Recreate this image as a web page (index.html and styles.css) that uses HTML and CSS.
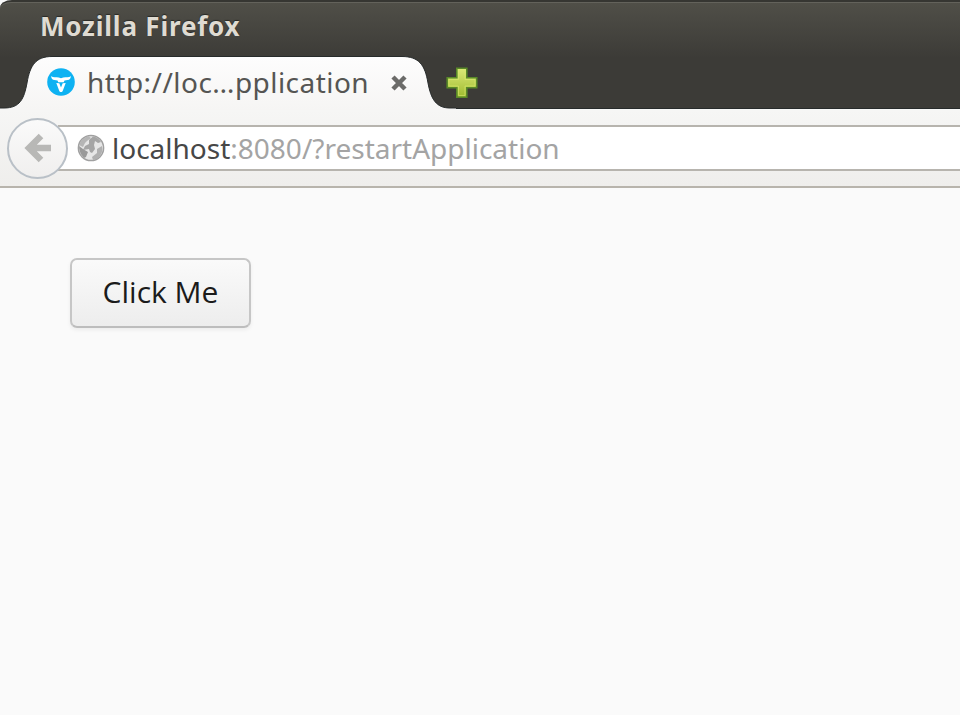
FILE: index.html
```html
<!DOCTYPE html>
<html lang="en">
<head>
<meta charset="utf-8">
<title>Mozilla Firefox</title>
<link rel="stylesheet" href="styles.css">
</head>
<body>
<header class="chrome">
  <div class="titlebar"><span class="title">Mozilla Firefox</span></div>
  <div class="tabs">
    <div class="tab">
      <svg class="tab-shape" width="460" height="55" viewBox="0 0 460 55">
        <defs><linearGradient id="tabfill" x1="0" y1="0" x2="0" y2="1"><stop offset="0" stop-color="#fdfdfd"/><stop offset="1" stop-color="#f6f5f4"/></linearGradient></defs>
        <path d="M0 55V53H8C24 53 28 44 31 28C34 10 40 1.500 56 1.500H406C423 1.500 429 10 432 28C435 44 440 53 454 53H460V55Z" fill="url(#tabfill)"/>
        <path d="M0 53H8C24 53 28 44 31 28C34 10 40 1.500 56 1.500H406C423 1.500 429 10 432 28C435 44 440 53 454 53H460" fill="none" stroke="#272b2b"/>
      </svg>
      <svg class="favicon" width="28" height="28" viewBox="0 0 28 28">
        <circle cx="14" cy="14" r="13.800" fill="#0eb2f2"/>
        <path d="M4.300 8Q5.500 9.600 9 9.200Q11.300 9 14 10.200Q16.700 9 19 9.200Q22.500 9.600 23.700 8Q24 11.700 20.500 12.100L17.500 12.500L16.700 14.200H11.300L10.500 12.500L7.500 12.100Q4 11.700 4.300 8Z" fill="#fff"/>
        <path d="M9.300 15L12.300 15.200L14 19.500L15.700 15.200L18.700 15L15.600 23.200Q14 25 12.400 23.200Z" fill="#fff"/>
      </svg>
      <span class="tab-label">http://loc…pplication</span>
      <svg class="close" width="18" height="18" viewBox="0 0 18 18"><path d="M3 3L15 15M15 3L3 15" stroke="#6b6b69" stroke-width="4.500"/></svg>
    </div>
    <svg class="newtab" width="32" height="32" viewBox="0 0 32 32">
      <defs><linearGradient id="plus" x1="0" y1="0" x2="0" y2="1"><stop offset="0" stop-color="#dce878"/><stop offset="1" stop-color="#9dbb2e"/></linearGradient></defs>
      <path d="M10.800 1.200H20.800V10.800H30.700V20.800H20.800V30.300H10.800V20.800H1.200V10.800H10.800Z" fill="url(#plus)" stroke="#598928" stroke-width="1.600"/>
      <path d="M12.500 3H19V12.500H29V19H19V28.500H12.500V19H3V12.500H12.500Z" fill="none" stroke="#d9e970" stroke-opacity=".6"/>
    </svg>
  </div>
</header>
<nav class="toolbar">
  <div class="back">
    <svg width="28" height="30" viewBox="0 0 28 30"><path d="M17 3L5 15L17 27M5 15H27" fill="none" stroke="#b8b8b6" stroke-width="6.500"/></svg>
  </div>
  <div class="urlbar">
    <svg class="globe" width="28" height="28" viewBox="0 0 28 28">
      <circle cx="14" cy="14" r="12.600" fill="#e6e6e6" stroke="#a0a0a0" stroke-width="1.500"/>
      <path d="M2 11Q4 5 11 2L14 4L10 7L8 9L6 13Z" fill="#b5b5b5"/>
      <path d="M12 6L16 2.500Q21 3 24 8L21 9L18 7L17 11L18 15L15 19L13 18L12 15L6 16L8 12L12 10Z" fill="#a5a5a5"/>
      <path d="M20 15L25 12Q27 19 20 25L16 26L15 23L20 19Z" fill="#b0b0b0"/>
      <path d="M2 12L6 15L11 18L9 23L7 24Q2 19 2 12Z" fill="#999"/>
    </svg>
    <span class="url"><span class="host">localhost</span>:8080/?restartApplication</span>
  </div>
</nav>
<main class="page"><button class="button"><span class="button-label">Click Me</span></button></main>
</body>
</html>
```
FILE: styles.css
```css
* { box-sizing: border-box; }
body { margin: 0; height: 715px; overflow: hidden; background: #fafafa; font-family: "Noto Sans", sans-serif; }
.chrome { height: 110px; background: linear-gradient(#504f48, #3c3b37 56px); border-top: 2px solid #363632; border-top-left-radius: 12px 8px; border-bottom: 1px solid #f8f8f7; }
.titlebar { height: 53px; padding-left: 40px; border-top: 1px solid #63625b; border-top-left-radius: 11px 7px; display: flex; align-items: center; }
.title { font-size: 26px; line-height: 36px; font-weight: 700; color: #dfdbd2; letter-spacing: .8px; margin-top: -7px; text-shadow: 0 -1px 1px #292925; white-space: nowrap; }
.tabs { height: 54px; display: flex; box-shadow: inset 0 -1px #272b2b; }
.tab { position: relative; width: 446px; height: 54px; display: flex; align-items: center; padding-left: 47px; }
.tab-shape { position: absolute; left: -4px; top: 0; }
.favicon, .tab-label, .close { position: relative; flex: none; }
.tab-label { margin-left: 12px; width: 303px; font-size: 28px; line-height: 38px; letter-spacing: .46px; color: #555553; white-space: nowrap; }
.close { margin-top: 2px; }
.newtab { position: relative; margin-top: 12px; }
.toolbar { height: 78px; display: flex; align-items: center; padding-left: 7px; background: linear-gradient(#f6f6f5, #efeeec); border-bottom: 2px solid #b8b4ac; }
.back { position: relative; z-index: 1; flex: none; width: 61px; height: 61px; border: 2px solid #b9c0c7; border-radius: 50%; background: linear-gradient(#fafafa, #f0efee); display: flex; align-items: center; justify-content: center; }
.urlbar { flex: 1; height: 46px; margin-left: -10px; padding-left: 19px; display: flex; align-items: center; background: #fff; border-top: 2px solid #b7b4ae; border-bottom: 2px solid #b7b4ae; }
.globe { flex: none; }
.url { margin-left: 7px; font-size: 28px; line-height: 38px; color: #a4a4a4; white-space: nowrap; }
.host { color: #474747; }
.page { padding: 70px; height: 527px; }
.button { display: flex; align-items: center; justify-content: center; width: 181px; height: 70px; padding: 0; border: 2px solid #c6c6c6; border-bottom-color: #bdbdbd; border-radius: 7px; background: linear-gradient(#fafafa, #ededed); box-shadow: 0 2px 4px rgba(0,0,0,.06); font: 30px/40px "Open Sans", sans-serif; color: #1b1b1b; white-space: nowrap; }
.button-label { margin-bottom: 2px; }
```
